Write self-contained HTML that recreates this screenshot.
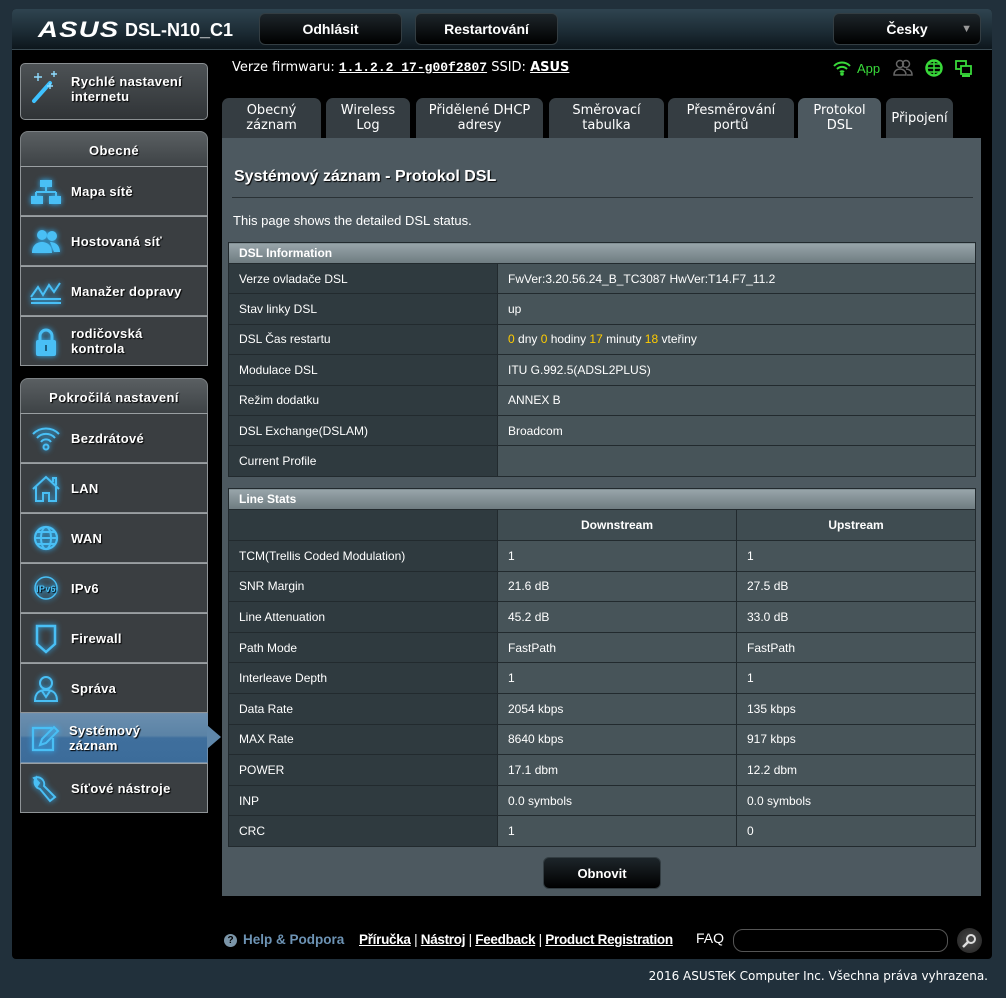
<!DOCTYPE html>
<html><head><meta charset="utf-8">
<style>
*{margin:0;padding:0;box-sizing:border-box}
body{width:1006px;height:998px;background:#21303b;position:relative;overflow:hidden;font-family:"Liberation Sans",Arial,sans-serif;color:#fff}
.abs{position:absolute}
#frame{left:12px;top:9px;width:980px;height:950px;background:#000;border-radius:4px}
#hdr{left:12px;top:9px;width:980px;height:41px;background:linear-gradient(180deg,#2f4450 0%,#1b2a33 60%,#0d161c 100%);border-radius:4px 4px 0 0;border-bottom:1px solid #3a4a52}
.vb{font-family:"DejaVu Sans",Verdana,sans-serif}
.hbtn{background:linear-gradient(#1d252a,#000);border:1px solid #333d42;border-radius:6px;font-weight:bold;font-size:14px;text-align:center;line-height:30px;height:32px;top:13px;color:#fff}
.sh{left:20px;width:188px;border:1px solid #7c8184;border-radius:8px 8px 0 0;background:linear-gradient(#5a5f62,#3e4346);font-weight:bold;font-size:13px;letter-spacing:0.4px;text-align:center;color:#fff;text-shadow:1px 1px 1px #000}
.item{left:20px;width:188px;height:50px;background:#3a3e41;border:1px solid #8f9497;border-top-color:#9a9fa2;font-weight:bold;font-size:13px;letter-spacing:0.3px;color:#fff;text-shadow:1px 1px 1px #000;line-height:15px}
.item .t{position:absolute;left:50px;top:0;height:48px;display:flex;align-items:center}
.item svg{position:absolute;left:9px;top:10px;filter:drop-shadow(0 0 3px #2fb6ff)}
.tab{top:98px;height:40px;background:#353d42;border-radius:7px 7px 0 0;font-size:13px;text-align:center;line-height:15px;color:#fff;display:flex;align-items:center;justify-content:center}
#panel{left:222px;top:138px;width:759px;height:758px;background:#4d5960}
table{border-collapse:collapse;font-size:12px;position:absolute;left:228px;width:748px}
td{border:1px solid #222a2e;padding-left:10px;color:#fff}
.t1 td{height:30.4px}
.t2 td{height:30.6px}
td.l{background:#2f3a3f;width:269px}
td.v{background:#475459}
.th td{background:linear-gradient(#98a5aa,#6e7b80);height:21px !important;font-weight:bold;border:1px solid #222a2e}
.y{color:#ffcc00}
.ul{text-decoration:underline;font-weight:bold}
</style></head><body>
<div id="frame" class="abs"></div>
<div id="hdr" class="abs"></div>
<div class="abs" style="left:38px;top:17px;font-size:22px;font-weight:bold;font-style:italic;letter-spacing:1px;color:#fff;transform:scaleX(1.25);transform-origin:left">ASUS</div>
<div class="abs" style="left:125px;top:20px;font-size:18px;font-weight:bold;color:#fff">DSL-N10_C1</div>
<div class="abs hbtn" style="left:259px;width:143px">Odhlásit</div>
<div class="abs hbtn" style="left:415px;width:143px">Restartování</div>
<div class="abs hbtn" style="left:833px;width:148px">Česky<span style="position:absolute;right:8px;top:0;color:#999;font-size:11px">▼</span></div>

<div class="abs vb" style="left:232px;top:60px;font-size:13px">Verze firmwaru: <span style="font-family:'Liberation Mono',monospace;font-weight:bold;text-decoration:underline">1.1.2.2_17-g00f2807</span> SSID: <span class="ul">ASUS</span></div>
<svg class="abs" style="left:833px;top:60px" width="18" height="16" viewBox="0 0 18 16"><path d="M1 6a11 11 0 0 1 16 0M4 9a7 7 0 0 1 10 0M7 12a3 3 0 0 1 4 0" stroke="#39d93a" stroke-width="2" fill="none"/><circle cx="9" cy="14" r="1.8" fill="#39d93a"/></svg>
<div class="abs" style="left:857px;top:61px;font-size:13px;color:#39d93a">App</div>
<svg class="abs" style="left:893px;top:59px" width="20" height="18" viewBox="0 0 20 18"><circle cx="7" cy="5" r="3.5" fill="none" stroke="#666" stroke-width="1.5"/><circle cx="13" cy="5" r="3.5" fill="none" stroke="#666" stroke-width="1.5"/><path d="M1 16c0-5 4-6 6-6s6 1 6 6zM13 10c2 0 6 1 6 6h-5" fill="none" stroke="#666" stroke-width="1.5"/></svg>
<svg class="abs" style="left:925px;top:59px" width="18" height="18" viewBox="0 0 18 18"><circle cx="9" cy="9" r="7.5" fill="none" stroke="#39d93a" stroke-width="2.5"/><path d="M2 9h14M9 2v14M4 5h10M4 13h10" stroke="#39d93a" stroke-width="1.5"/></svg>
<svg class="abs" style="left:955px;top:60px" width="18" height="18" viewBox="0 0 18 18"><rect x="1" y="1" width="10" height="8" fill="none" stroke="#39d93a" stroke-width="1.8"/><rect x="6" y="6" width="10" height="8" fill="#000" stroke="#39d93a" stroke-width="1.8"/><path d="M7 16h8" stroke="#39d93a" stroke-width="2"/></svg>

<div class="abs" style="left:20px;top:63px;width:188px;height:57px;background:linear-gradient(#4d5255,#303437);border:1px solid #8a8f92;border-radius:5px"></div>
<svg class="abs" style="left:30px;top:69px" width="32" height="36" viewBox="0 0 32 36"><path d="M4 32 L20 14" stroke="#3ec2ff" stroke-width="4" stroke-linecap="round"/><path d="M8 4v8M4 8h8M24 2v6M21 5h6M20 14v6M17 17h6" stroke="#8fdcff" stroke-width="1.4"/></svg>
<div class="abs" style="left:71px;top:74px;font-size:13px;letter-spacing:0.3px;font-weight:bold;line-height:15px;text-shadow:1px 1px 1px #000">Rychlé nastavení<br>internetu</div>

<div class="abs sh" style="top:131px;height:36px;line-height:38px">Obecné</div>
<div class="abs item" style="top:166px"><svg width="32" height="30" viewBox="0 0 32 30"><rect x="10" y="3" width="12" height="7" fill="#49bff5"/><path d="M16 10v5M6 15h20M6 15v4M26 15v4" stroke="#49bff5" stroke-width="2"/><rect x="1" y="19" width="12" height="8" fill="#49bff5"/><rect x="19" y="19" width="12" height="8" fill="#49bff5"/></svg><div class="t">Mapa sítě</div></div>
<div class="abs item" style="top:216px"><svg width="32" height="30" viewBox="0 0 32 30"><circle cx="12" cy="8" r="5" fill="#49bff5"/><circle cx="22" cy="9" r="5" fill="#49bff5"/><path d="M2 26c0-8 5-11 10-11s10 3 10 11zM20 15c5 0 10 3 10 10h-6" fill="#49bff5"/></svg><div class="t">Hostovaná síť</div></div>
<div class="abs item" style="top:266px"><svg width="32" height="30" viewBox="0 0 32 30"><path d="M1 20l7-10 5 8 6-10 5 7 6-9M1 26h30M1 22h30" stroke="#49bff5" stroke-width="2" fill="none"/></svg><div class="t">Manažer dopravy</div></div>
<div class="abs item" style="top:316px"><svg width="32" height="30" viewBox="0 0 32 30"><path d="M10 14V9a6 6 0 0 1 12 0v5" stroke="#49bff5" stroke-width="3" fill="none"/><rect x="6" y="13" width="20" height="16" rx="2" fill="#49bff5"/><rect x="15" y="18" width="2" height="6" fill="#1c5f80"/></svg><div class="t">rodičovská<br>kontrola</div></div>

<div class="abs sh" style="top:378px;height:36px;line-height:38px">Pokročilá nastavení</div>
<div class="abs item" style="top:413px"><svg width="32" height="30" viewBox="0 0 32 30"><path d="M3 10a18 18 0 0 1 26 0M7 14a12 12 0 0 1 18 0M11 18a6 6 0 0 1 10 0" stroke="#49bff5" stroke-width="2" fill="none"/><circle cx="16" cy="23" r="2.5" fill="none" stroke="#49bff5" stroke-width="2"/></svg><div class="t">Bezdrátové</div></div>
<div class="abs item" style="top:463px"><svg width="32" height="30" viewBox="0 0 32 30"><path d="M3 15L16 3l13 12M6 13v14h7v-8h6v8h7V13M23 8V4h3v7" stroke="#49bff5" stroke-width="2" fill="none"/></svg><div class="t">LAN</div></div>
<div class="abs item" style="top:513px"><svg width="32" height="30" viewBox="0 0 32 30"><circle cx="16" cy="14" r="11" fill="none" stroke="#49bff5" stroke-width="2.2"/><ellipse cx="16" cy="14" rx="5" ry="11" fill="none" stroke="#49bff5" stroke-width="2"/><path d="M5 14h22M7 8h18M7 20h18" stroke="#49bff5" stroke-width="2"/></svg><div class="t">WAN</div></div>
<div class="abs item" style="top:563px"><svg width="32" height="30" viewBox="0 0 32 30"><circle cx="16" cy="14" r="11" fill="none" stroke="#49bff5" stroke-width="1.5"/><text x="16" y="18" font-size="9" fill="#49bff5" text-anchor="middle" font-family="Liberation Sans">IPv6</text></svg><div class="t">IPv6</div></div>
<div class="abs item" style="top:613px"><svg width="32" height="30" viewBox="0 0 32 30"><path d="M7 2h18v18l-9 8-9-8z" fill="none" stroke="#49bff5" stroke-width="2.5"/></svg><div class="t">Firewall</div></div>
<div class="abs item" style="top:663px"><svg width="32" height="30" viewBox="0 0 32 30"><circle cx="16" cy="9" r="6" fill="none" stroke="#49bff5" stroke-width="2"/><path d="M5 27c0-8 4-11 11-11s11 3 11 11zM12 17l4 6 4-6" fill="none" stroke="#49bff5" stroke-width="2"/></svg><div class="t">Správa</div></div>
<div class="abs item" style="top:713px;background:linear-gradient(#6a8eae 0%,#5b83a6 45%,#3f6f9d 50%,#3c6c9a 100%);border-color:#6f8fae"><svg width="32" height="30" viewBox="0 0 32 30"><path d="M22 4H3v22h20V14" fill="none" stroke="#49bff5" stroke-width="2.2"/><path d="M10 21l2-6 12-12 4 4-12 12z" fill="none" stroke="#49bff5" stroke-width="2"/></svg><div class="t" style="left:48px">Systémový<br>záznam</div></div>
<div class="abs" style="left:207px;top:725px;width:0;height:0;border-left:14px solid #5f87aa;border-top:12px solid transparent;border-bottom:12px solid transparent"></div>
<div class="abs item" style="top:763px"><svg width="32" height="30" viewBox="0 0 32 30"><path d="M6 4a7 7 0 0 0 4 11l10 12 5-4-11-11a7 7 0 0 0-10-8l5 5-2 3z" fill="none" stroke="#49bff5" stroke-width="2"/></svg><div class="t">Síťové nástroje</div></div>

<div class="abs tab vb" style="left:222px;width:99px">Obecný<br>záznam</div>
<div class="abs tab vb" style="left:326px;width:84px">Wireless<br>Log</div>
<div class="abs tab vb" style="left:416px;width:127px">Přidělené DHCP<br>adresy</div>
<div class="abs tab vb" style="left:549px;width:115px">Směrovací<br>tabulka</div>
<div class="abs tab vb" style="left:668px;width:126px">Přesměrování<br>portů</div>
<div class="abs tab vb" style="left:798px;width:83px;background:#4d5960">Protokol<br>DSL</div>
<div class="abs tab vb" style="left:886px;width:67px">Připojení</div>

<div id="panel" class="abs"></div>
<div class="abs" style="left:234px;top:168px;font-size:16px;font-weight:bold;text-shadow:1px 1px 1px #000">Systémový záznam - Protokol DSL</div>
<div class="abs" style="left:232px;top:197px;width:741px;height:1px;background:#6f7b80;border-top:1px solid #2a3236"></div>
<div class="abs" style="left:233px;top:213px;font-size:13px">This page shows the detailed DSL status.</div>

<table class="t1" style="top:242px">
<tr class="th"><td colspan="2">DSL Information</td></tr>
<tr><td class="l">Verze ovladače DSL</td><td class="v">FwVer:3.20.56.24_B_TC3087 HwVer:T14.F7_11.2</td></tr>
<tr><td class="l">Stav linky DSL</td><td class="v">up</td></tr>
<tr><td class="l">DSL Čas restartu</td><td class="v"><span class="y">0</span> dny <span class="y">0</span> hodiny <span class="y">17</span> minuty <span class="y">18</span> vteřiny</td></tr>
<tr><td class="l">Modulace DSL</td><td class="v">ITU G.992.5(ADSL2PLUS)</td></tr>
<tr><td class="l">Režim dodatku</td><td class="v">ANNEX B</td></tr>
<tr><td class="l">DSL Exchange(DSLAM)</td><td class="v">Broadcom</td></tr>
<tr><td class="l">Current Profile</td><td class="v"></td></tr>
</table>

<table class="t2" style="top:488px">
<tr class="th"><td colspan="3">Line Stats</td></tr>
<tr><td class="l" style="height:31px"></td><td class="v" style="background:#3f4c51;text-align:center;font-weight:bold;padding:0;width:239px">Downstream</td><td class="v" style="background:#3f4c51;text-align:center;font-weight:bold;padding:0">Upstream</td></tr>
<tr><td class="l">TCM(Trellis Coded Modulation)</td><td class="v">1</td><td class="v">1</td></tr>
<tr><td class="l">SNR Margin</td><td class="v">21.6 dB</td><td class="v">27.5 dB</td></tr>
<tr><td class="l">Line Attenuation</td><td class="v">45.2 dB</td><td class="v">33.0 dB</td></tr>
<tr><td class="l">Path Mode</td><td class="v">FastPath</td><td class="v">FastPath</td></tr>
<tr><td class="l">Interleave Depth</td><td class="v">1</td><td class="v">1</td></tr>
<tr><td class="l">Data Rate</td><td class="v">2054 kbps</td><td class="v">135 kbps</td></tr>
<tr><td class="l">MAX Rate</td><td class="v">8640 kbps</td><td class="v">917 kbps</td></tr>
<tr><td class="l">POWER</td><td class="v">17.1 dbm</td><td class="v">12.2 dbm</td></tr>
<tr><td class="l">INP</td><td class="v">0.0 symbols</td><td class="v">0.0 symbols</td></tr>
<tr><td class="l">CRC</td><td class="v">1</td><td class="v">0</td></tr>
</table>

<div class="abs hbtn" style="left:543px;top:857px;width:118px;height:32px;line-height:32px;font-size:13px">Obnovit</div>

<div class="abs" style="left:224px;top:934px;width:13px;height:13px;border-radius:50%;background:#7b95a8;color:#000;font-size:10px;font-weight:bold;text-align:center;line-height:13px">?</div>
<div class="abs" style="left:243px;top:932px;font-size:13.5px;font-weight:bold;color:#6d93b4">Help &amp; Podpora</div>
<div class="abs" style="left:359px;top:932px;font-size:13.5px;letter-spacing:-0.3px"><span class="ul">Příručka</span> | <span class="ul">Nástroj</span> | <span class="ul">Feedback</span> | <span class="ul">Product Registration</span></div>
<div class="abs" style="left:696px;top:930px;font-size:14px">FAQ</div>
<div class="abs" style="left:733px;top:929px;width:215px;height:23px;border:1px solid #555;border-radius:10px;background:#000"></div>
<div class="abs" style="left:957px;top:928px;width:25px;height:25px;border-radius:50%;background:radial-gradient(#4a4a4a,#222)"></div>
<svg class="abs" style="left:961px;top:932px" width="17" height="17" viewBox="0 0 17 17"><circle cx="10" cy="7" r="4" fill="none" stroke="#ddd" stroke-width="2"/><path d="M7 10l-5 5" stroke="#ddd" stroke-width="2.5"/></svg>
<div class="abs vb" style="right:18px;top:969px;font-size:12px;color:#fff">2016 ASUSTeK Computer Inc. Všechna práva vyhrazena.</div>
</body></html>
